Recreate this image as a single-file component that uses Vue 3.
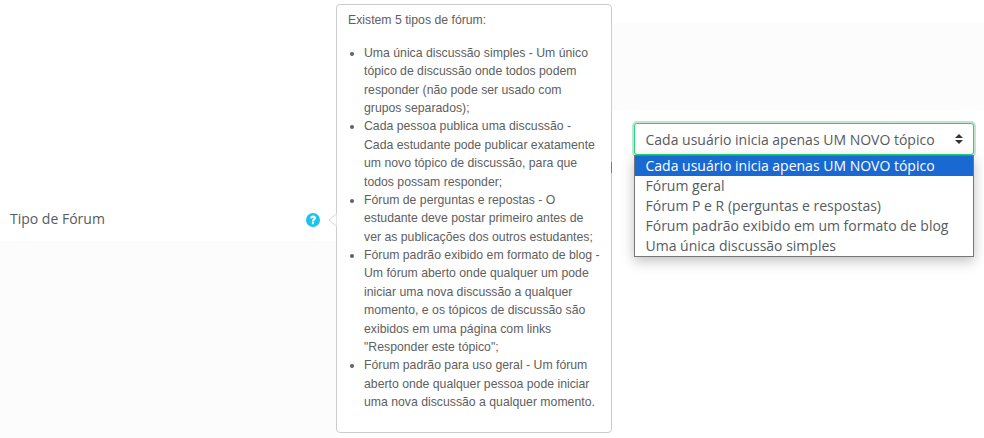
<script setup>
const options = [
  'Cada usuário inicia apenas UM NOVO tópico',
  'Fórum geral',
  'Fórum P e R (perguntas e respostas)',
  'Fórum padrão exibido em um formato de blog',
  'Uma única discussão simples'
]

const tipos = [
  'Uma única discussão simples - Um único tópico de discussão onde todos podem responder (não pode ser usado com grupos separados);',
  'Cada pessoa publica uma discussão - Cada estudante pode publicar exatamente um novo tópico de discussão, para que todos possam responder;',
  'Fórum de perguntas e repostas - O estudante deve postar primeiro antes de ver as publicações dos outros estudantes;',
  'Fórum padrão exibido em formato de blog - Um fórum aberto onde qualquer um pode iniciar uma nova discussão a qualquer momento, e os tópicos de discussão são exibidos em uma página com links "Responder este tópico";',
  'Fórum padrão para uso geral - Um fórum aberto onde qualquer pessoa pode iniciar uma nova discussão a qualquer momento.'
]
</script>

<template>
  <div class="page">
    <div class="label-col">
      <span class="label">Tipo de Fórum</span>
      <svg class="help" viewBox="0 0 14 14" aria-hidden="true">
        <circle cx="7" cy="7" r="7" fill="#1cc3ee" />
        <path d="M4.1 5.2C4.2 3.6 5.5 2.5 7.1 2.5c1.7 0 2.9 1.1 2.9 2.5 0 2-2 2-2 3.4H5.9c0-2.3 1.9-2.3 1.9-3.3 0-.4-.3-.7-.8-.7-.5 0-.8.4-.9 1z" fill="#fff" />
        <rect x="5.9" y="9.1" width="2.1" height="2.1" fill="#fff" />
      </svg>
    </div>

    <div class="popover">
      <svg class="caret" viewBox="0 0 9 14" aria-hidden="true">
        <path d="M8.5 .5 1 7l7.5 6.5" fill="#fff" stroke="#d8d8d8" />
      </svg>
      <span class="tick"></span>
      <p class="intro">Existem 5 tipos de fórum:</p>
      <ul class="list">
        <li v-for="t in tipos" :key="t">{{ t }}</li>
      </ul>
    </div>

    <div class="field">
      <div class="select">
        <span>{{ options[0] }}</span>
        <svg class="arrows" viewBox="0 0 8 10" aria-hidden="true">
          <path d="M4 0 8 4H0zM4 10 0 6H8z" fill="#333" />
        </svg>
        <div class="menu">
          <div v-for="(o, i) in options" :key="o" class="opt" :class="{ on: i === 0 }">{{ o }}</div>
        </div>
      </div>
    </div>
  </div>
</template>

<style scoped>
.page {
  width: 984px;
  height: 438px;
  display: flex;
  overflow: hidden;
  background: #fff;
}
.label-col {
  width: 336px;
  height: 438px;
  flex: none;
  display: flex;
  align-items: center;
  justify-content: space-between;
  padding: 0 16px 0 10px;
  box-sizing: border-box;
  background: linear-gradient(#fff 241px, #fcfcfc 241px);
}
.label {
  font: 14px "Open Sans", sans-serif;
  color: #555b61;
  margin-top: -1px;
}
.help {
  width: 14px;
  height: 14px;
  margin-top: 1px;
}
.popover {
  position: relative;
  width: 276px;
  height: 429px;
  flex: none;
  margin-top: 4px;
  padding: 6px 10px 6px 11px;
  box-sizing: border-box;
  background: #fff;
  border: 1px solid #ccc;
  border-radius: 4px;
  font: 12.25px/18.375px "Liberation Sans", Arial, sans-serif;
  color: #606060;
}
.caret {
  position: absolute;
  left: -9px;
  top: 208px;
  width: 9px;
  height: 14px;
}
.tick {
  position: absolute;
  right: -1px;
  top: 157px;
  width: 1px;
  height: 11px;
  background: #1b9ec0;
}
.intro {
  margin: 0 0 14.5px;
}
.list {
  margin: 0;
  padding-left: 16px;
}
.field {
  flex: 1;
  padding: 123px 10px 0 22px;
  background: linear-gradient(#fff 23px, #fcfcfc 23px, #fcfcfc 110px, #fff 110px);
}
.select {
  position: relative;
  height: 32px;
  box-sizing: border-box;
  display: flex;
  align-items: center;
  justify-content: space-between;
  padding: 0 10px 0 10.5px;
  background: #fff;
  border: 1px solid #20d580;
  border-radius: 3px;
  box-shadow: 0 0 0 2px #c3e3d3;
  font: 14px "Open Sans", sans-serif;
  color: #555b61;
}
.arrows {
  width: 8px;
  height: 10px;
}
.menu {
  position: absolute;
  left: -1px;
  right: -1px;
  top: 31px;
  background: #fff;
  border: 1px solid #777;
  box-shadow: 0 4px 12px rgba(0, 0, 0, .25);
}
.opt {
  height: 20px;
  line-height: 20px;
  padding-left: 10.5px;
  white-space: nowrap;
}
.opt.on {
  background: #1a68d2;
  color: #fff;
}
</style>
